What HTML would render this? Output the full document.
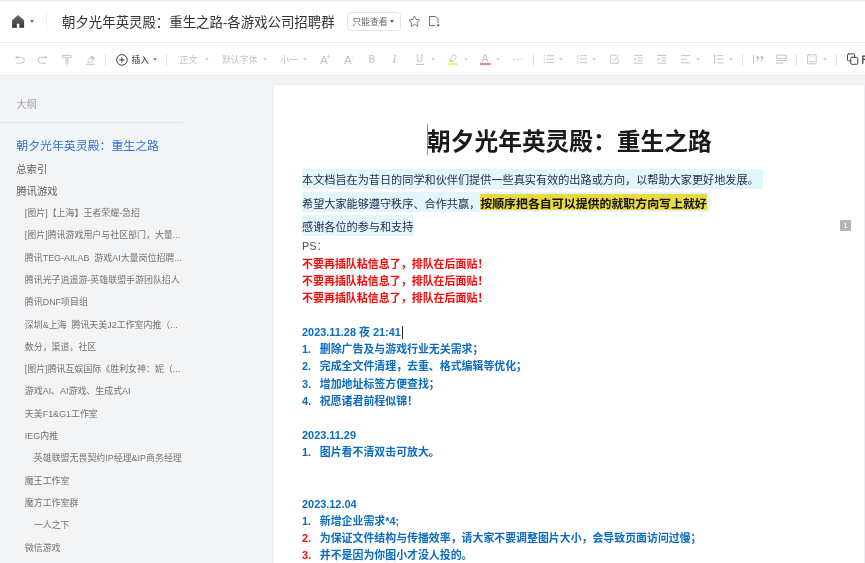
<!DOCTYPE html>
<html lang="zh-CN">
<head>
<meta charset="utf-8">
<title>朝夕光年英灵殿：重生之路-各游戏公司招聘群</title>
<style>
*{margin:0;padding:0;box-sizing:border-box}
html,body{width:865px;height:563px;overflow:hidden;background:#f3f4f6}
body{position:relative;font-family:"Liberation Sans","Noto Sans CJK SC",sans-serif;color:#333;-webkit-font-smoothing:antialiased}
#root{position:absolute;left:0;top:0;width:900px;height:600px;will-change:transform;filter:blur(0.4px)}
.abs{position:absolute;white-space:nowrap}
#header{position:absolute;left:0;top:0;width:900px;height:43px;background:#fff;border-bottom:1px solid #ececee}
#topline{position:absolute;left:0;top:0;width:900px;height:2px;background:linear-gradient(#e6e6e6,#fff)}
#toolbar{position:absolute;left:0;top:43px;width:900px;height:33px;background:#fff;border-bottom:1px solid #e7e8ea}
.t{position:absolute;white-space:nowrap;line-height:1}
.sep{position:absolute;width:1px;background:#e3e4e6}
.caret{position:absolute;width:0;height:0;border-left:2.4px solid transparent;border-right:2.4px solid transparent;border-top:3px solid #d4d6d9}
svg{position:absolute;overflow:visible}
/* sidebar */
.o{position:absolute;white-space:nowrap;line-height:14px;height:14px;color:#737373;font-size:8.95px}
.o1{font-size:10.3px;color:#626262;left:16.3px}
.o2{left:24.8px}
.o3{left:33.8px}
/* page */
#page{position:absolute;left:274px;top:84.5px;width:590px;height:520px;background:#fff;box-shadow:0 0 4px rgba(0,0,0,.07)}
.p{position:absolute;white-space:nowrap;left:302px;line-height:17px;height:17px}
.n{font-size:11.15px;color:#1f2747}
.hl{background:#e1f7fc;display:inline-block;height:20.3px;line-height:23.4px;vertical-align:top}
.l1 .hl{line-height:22.2px}.l2 .hl{line-height:25.4px}.l3 .hl{line-height:25.6px}
.b{font-weight:bold}
.red{color:#f80a0a;font-weight:bold;font-size:10.97px}
.blue{color:#0b6cc0;font-weight:bold;font-size:10.92px}
.num{display:inline-block;width:17.8px}
</style>
</head>
<body>
<div id="root">
<div id="header"></div>
<div id="topline"></div>
<div id="toolbar"></div>

<!-- header content -->
<svg style="left:11.8px;top:15px" width="12.2" height="12.8" viewBox="0 0 12.2 12.8"><defs><linearGradient id="hg" x1="0" y1="0" x2="0" y2="1"><stop offset="0" stop-color="#666"/><stop offset="0.7" stop-color="#4a4a4a"/><stop offset="1" stop-color="#2c2c2c"/></linearGradient></defs><path d="M6.1 0 L12.1 5.2 V12.8 H7.4 V8.8 H4.9 V12.8 H0.1 V5.2 Z" fill="url(#hg)"/></svg>
<div class="caret" style="left:30.1px;top:20.1px;border-top-color:#6a6a6a;border-left-width:2.5px;border-right-width:2.5px;border-top-width:3.2px"></div>
<div class="sep" style="left:45.5px;top:12.6px;height:17.4px;background:#f1f1f2"></div>
<div class="t" style="left:62px;top:14.6px;font-size:13.42px;line-height:15px;color:#333;letter-spacing:0">朝夕光年英灵殿：重生之路-各游戏公司招聘群</div>
<div class="abs" style="left:346.8px;top:12.1px;width:54.2px;height:18.7px;border:1px solid #e3e4e6;border-radius:3.5px"></div>
<div class="t" style="left:352.2px;top:18px;font-size:8.9px;color:#666">只能查看</div>
<div class="caret" style="left:390.2px;top:20.4px;border-top-color:#5c5c5c;border-left-width:2.2px;border-right-width:2.2px;border-top-width:3px"></div>
<svg style="left:407.8px;top:14.8px" width="12.8" height="12.2" viewBox="0 0 24 23"><path d="M12 1.8 L15.1 8.3 L22.2 9.2 L17 14.1 L18.3 21.2 L12 17.7 L5.7 21.2 L7 14.1 L1.8 9.2 L8.9 8.3 Z" fill="none" stroke="#606164" stroke-width="1.5" stroke-linejoin="round"/></svg>
<svg style="left:429.2px;top:15.8px" width="11.4" height="11.2" viewBox="0 0 11.4 11.2"><path d="M0.5 0.5 H6.6 L9 2.9 V7 M6.3 9.6 H0.5 V0.5" fill="none" stroke="#66676a" stroke-width="0.95"/><path d="M7.6 8.6 H11 L9.3 10.9 Z" fill="#55565a"/></svg>

<!-- toolbar content -->
<svg id="tb" style="left:0;top:43px" width="865" height="33" viewBox="0 43 865 33" fill="none" stroke="#c3c5c9" stroke-width="1" stroke-linecap="round" stroke-linejoin="round">
 <!-- undo -->
 <path d="M17.8 57.3 H21.3 A2.9 2.9 0 0 1 21.3 63.2 H16.4"/><path d="M17.9 55.2 L15 57.3 L17.9 59.3 Z" fill="#c3c5c9" stroke="none"/>
 <!-- redo -->
 <path d="M44.7 57.3 H41.2 A2.9 2.9 0 0 0 41.2 63.2 H46.1"/><path d="M44.6 55.2 L47.5 57.3 L44.6 59.3 Z" fill="#c3c5c9" stroke="none"/>
 <!-- format painter -->
 <path d="M63 55.3 H71 V57.8 H63 Z M67 57.8 V60 M66.2 60 H67.8 V64 H66.2 Z"/>
 <!-- eraser -->
 <path d="M86.6 64.3 H94.6 M88 60.4 L91.6 56 L94.3 58.2 L90.8 62.6 H89.2 Z"/><path d="M90 57.8 L92.8 60.2 L94.3 58.2 L91.6 56 Z" fill="#c3c5c9" stroke="none"/>
</svg>
<div class="sep" style="left:105px;top:53.5px;height:12px"></div>
<svg style="left:116.4px;top:53.7px" width="11.8" height="11.8" viewBox="0 0 11.8 11.8"><circle cx="5.9" cy="5.9" r="5.3" fill="none" stroke="#3a3b3e" stroke-width="1"/><path d="M5.9 3.2 V8.6 M3.2 5.9 H8.6" stroke="#3a3b3e" stroke-width="1" fill="none"/></svg>
<div class="t" style="left:131.4px;top:55.8px;font-size:8.75px;color:#333">插入</div>
<div class="caret" style="left:153.0px;top:58.3px;border-top-color:#8a8c90"></div>
<div class="sep" style="left:166px;top:53.5px;height:12px"></div>
<div class="t" style="left:179.6px;top:55.8px;font-size:8.8px;color:#c0c2c6">正文</div>
<div class="caret" style="left:205.1px;top:58.3px"></div>
<div class="t" style="left:222px;top:55.8px;font-size:8.9px;color:#c0c2c6">默认字体</div>
<div class="caret" style="left:263.4px;top:58.3px"></div>
<div class="t" style="left:280.3px;top:55.8px;font-size:8.85px;color:#c0c2c6">小一</div>
<div class="caret" style="left:302.8px;top:58.3px"></div>
<div class="t" style="left:320px;top:54.3px;font-size:11.6px;color:#c0c2c6">A<span style="font-size:6.5px;position:relative;top:-5px;left:-1px">+</span></div>
<div class="t" style="left:344px;top:54.3px;font-size:11.6px;color:#c0c2c6">A<span style="font-size:6.5px;position:relative;top:-5.4px;left:-0.6px">-</span></div>
<div class="t" style="left:368.6px;top:54.6px;font-size:10.4px;color:#c0c2c6">B</div>
<div class="t" style="left:392.6px;top:54.2px;font-size:11.6px;color:#c0c2c6;font-style:italic;font-family:'Liberation Serif',serif">I</div>
<div class="t" style="left:416px;top:54.2px;font-size:10px;color:#c0c2c6">U</div>
<div class="abs" style="left:415.6px;top:63.9px;width:8.2px;height:1px;background:#c3c5c9"></div>
<div class="caret" style="left:430.8px;top:58.3px"></div>

<svg style="left:0;top:43px" width="865" height="33" viewBox="0 43 865 33" fill="none" stroke="#c3c5c9" stroke-width="1" stroke-linecap="round" stroke-linejoin="round">
 <!-- highlighter -->
 <path d="M450.4 58.6 L453.6 54.6 L456.6 56.9 L453.4 60.9 L450.6 60.9 Z M449.6 61.2 H452"/>
 <rect x="447.2" y="62.8" width="10.8" height="2.4" fill="#f6f07a" stroke="none"/>
 <!-- font color -->
 <rect x="480" y="62.8" width="10.8" height="2.4" fill="#f28a8a" stroke="none"/>
 <!-- more -->
 <circle cx="514.4" cy="59.2" r="0.75" fill="#c3c5c9" stroke="none"/><circle cx="518" cy="59.2" r="0.75" fill="#c3c5c9" stroke="none"/><circle cx="521.6" cy="59.2" r="0.75" fill="#c3c5c9" stroke="none"/>
 <!-- bullet list -->
 <path d="M547 55.7 H553.8 M547 59.1 H553.8 M547 62.5 H553.8"/><path d="M544.2 55.7 h0.4 M544.2 59.1 h0.4 M544.2 62.5 h0.4" stroke-width="1.3"/>
 <!-- numbered list -->
 <path d="M580.6 55.7 H586.6 M580.6 59.1 H586.6 M580.6 62.5 H586.6"/><path d="M578 54.8 V56.4 M578 58.2 V59.8 M578 61.6 V63.4" stroke-width="0.9"/>
 <!-- checkbox -->
 <path d="M618.2 58.6 V63.2 H610.4 V55.2 H616.4"/><path d="M612.4 58.6 L614.2 60.6 L618.4 55.6"/>
 <!-- outdent -->
 <path d="M634 55.4 H642.4 M638 58 H642.4 M638 60.6 H642.4 M634 63.2 H642.4"/><path d="M636.2 57.6 L633.8 59.3 L636.2 61 Z" fill="#c3c5c9" stroke="none"/>
 <!-- indent -->
 <path d="M657.6 55.4 H666 M661.6 58 H666 M661.6 60.6 H666 M657.6 63.2 H666"/><path d="M657.6 57.6 L660 59.3 L657.6 61 Z" fill="#c3c5c9" stroke="none"/>
 <!-- align -->
 <path d="M681.4 55.6 H689.8 M681.4 59.2 H686.6 M681.4 62.8 H689.8"/>
 <!-- line spacing -->
 <path d="M717.4 55.6 H723 M717.4 59.2 H723 M717.4 62.8 H723 M714.6 55 V63.4"/><path d="M713.4 56.4 L714.6 54.8 L715.8 56.4 Z M713.4 62 L714.6 63.6 L715.8 62 Z" fill="#c3c5c9" stroke="none"/>
 <!-- quote -->
 <path d="M753.6 55.2 V63.6"/>
 <!-- divider icon -->
 <rect x="776.6" y="55.2" width="9.8" height="3.2" rx="0.3"/><path d="M776.4 60.4 H786.6 M776.4 63.2 H783"/>
 <!-- image -->
 <rect x="807.6" y="54.8" width="8.6" height="9" rx="0.8"/><path d="M809.4 61.8 H814.4" stroke-width="1"/><path d="M809.4 56.9 H814.4" stroke-width="0.6" stroke="#dcdde0"/>
 <!-- copy -->
 <rect x="847.5" y="53.9" width="7" height="7" rx="1" stroke="#454649" fill="#fff"/><rect x="850.8" y="57.3" width="7" height="7" rx="1" stroke="#454649" fill="#fff"/>
 <path d="M862.8 56 V63.6 M862.8 56.2 H866 M862.8 59.4 H866" stroke="#3a3b3e" stroke-width="1.2"/>
</svg>
<div class="t" style="left:481.6px;top:53.4px;font-size:10.6px;color:#c0c2c6">A</div>
<svg style="left:755.6px;top:56.2px" width="7.6" height="5.8" viewBox="0 0 7.6 5.8"><path d="M3.2 1.6 C3.2 3.7 2.3 5.1 0.8 5.7 L0.4 5.1 C1.4 4.5 1.8 3.7 1.8 3 A1.45 1.45 0 1 1 3.2 1.6 Z M7.4 1.6 C7.4 3.7 6.5 5.1 5 5.7 L4.6 5.1 C5.6 4.5 6 3.7 6 3 A1.45 1.45 0 1 1 7.4 1.6 Z" fill="#c0c2c6"/></svg>
<div class="caret" style="left:463.6px;top:58.3px"></div>
<div class="caret" style="left:496.3px;top:58.3px"></div>
<div class="sep" style="left:533px;top:53.5px;height:12px"></div>
<div class="caret" style="left:559.4px;top:58.3px"></div>
<div class="caret" style="left:592.2px;top:58.3px"></div>
<div class="caret" style="left:696.0px;top:58.3px"></div>
<div class="caret" style="left:729.1px;top:58.3px"></div>
<div class="sep" style="left:742px;top:53.5px;height:12px"></div>
<div class="sep" style="left:796.4px;top:53.5px;height:12px"></div>
<div class="caret" style="left:822.6px;top:58.3px"></div>
<div class="sep" style="left:836px;top:53.5px;height:12px"></div>

<!-- sidebar -->
<div class="t" style="left:16.3px;top:99.9px;font-size:10.3px;color:#a3a5a8">大纲</div>
<div class="abs" style="left:0;top:121.6px;width:182px;height:1px;background:#e2e3e6"></div>
<div class="o o1" style="top:138.5px;font-size:11.9px;color:#2d71da">朝夕光年英灵殿：重生之路</div>
<div class="o o1" style="top:163px">总索引</div>
<div class="o o1" style="top:185px">腾讯游戏</div>
<div class="o o2" style="top:206px">[图片]【上海】王者荣耀-急招</div>
<div class="o o2" style="top:228px">[图片]腾讯游戏用户与社区部门，大量...</div>
<div class="o o2" style="top:251px">腾讯TEG-AILAB&nbsp; 游戏AI大量岗位招聘...</div>
<div class="o o2" style="top:273px">腾讯光子逍遥游-英雄联盟手游团队招人</div>
<div class="o o2" style="top:295px">腾讯DNF项目组</div>
<div class="o o2" style="top:318px">深圳&amp;上海&nbsp; 腾讯天美J2工作室内推（...</div>
<div class="o o2" style="top:340px">数分，渠道，社区</div>
<div class="o o2" style="top:362px">[图片]腾讯互娱国际《胜利女神：妮（...</div>
<div class="o o2" style="top:384px">游戏AI、AI游戏、生成式AI</div>
<div class="o o2" style="top:407px">天美F1&amp;G1工作室</div>
<div class="o o2" style="top:429px">IEG内推</div>
<div class="o o3" style="top:451px">英雄联盟无畏契约IP经理&amp;IP商务经理</div>
<div class="o o2" style="top:474px">魔王工作室</div>
<div class="o o2" style="top:496px">魔方工作室群</div>
<div class="o o3" style="top:518px">一人之下</div>
<div class="o o2" style="top:541px">微信游戏</div>

<!-- page -->
<div id="page"></div>
<div class="abs" style="left:426.6px;top:124px;width:1.4px;height:30.6px;background:#f4773a"></div>
<div class="t b" style="left:427px;top:128px;font-size:23.73px;line-height:28px;color:#1a1a1a">朝夕光年英灵殿：重生之路</div>

<div class="p n l1" style="top:168.7px;height:20.3px"><span class="hl">本文档旨在为昔日的同学和伙伴们提供一些真实有效的出路或方向，以帮助大家更好地发展。<span style="display:inline-block;width:4px"></span></span></div>
<div class="p n l2" style="top:192px;height:20.3px"><span class="hl">希望大家能够遵守秩序、合作共赢，</span><span class="hl b" style="background:linear-gradient(#e1f7fc 0,#e1f7fc 2.1px,#ecd93e 2.1px,#ecd93e 17.8px,#e1f7fc 17.8px);color:#111;font-size:11.93px">按顺序把各自可以提供的就职方向写上就好</span><span class="hl" style="width:3.5px"></span></div>
<div class="p n l3" style="top:215.3px;height:20.3px"><span class="hl">感谢各位的参与和支持</span></div>
<div class="p" style="top:238px;font-size:10.9px;color:#4e4e4e">PS：</div>
<div class="p red" style="top:256px">不要再插队粘信息了，排队在后面贴！</div>
<div class="p red" style="top:273px">不要再插队粘信息了，排队在后面贴！</div>
<div class="p red" style="top:290px">不要再插队粘信息了，排队在后面贴！</div>

<div class="p blue" style="top:324px">2023.11.28 夜 21:41</div>
<div class="abs" style="left:401.6px;top:325.8px;width:1px;height:13px;background:#222"></div>
<div class="p blue" style="top:341px"><span class="num">1.</span>删除广告及与游戏行业无关需求；</div>
<div class="p blue" style="top:358px"><span class="num">2.</span>完成全文件清理，去重、格式编辑等优化；</div>
<div class="p blue" style="top:376px"><span class="num">3.</span>增加地址标签方便查找；</div>
<div class="p blue" style="top:393px"><span class="num">4.</span>祝愿诸君前程似锦！</div>

<div class="p blue" style="top:427px">2023.11.29</div>
<div class="p blue" style="top:444px"><span class="num">1.</span>图片看不清双击可放大。</div>

<div class="p blue" style="top:496px">2023.12.04</div>
<div class="p blue" style="top:513px"><span class="num">1.</span>新增企业需求*4;</div>
<div class="p blue" style="top:530px"><span class="num" style="color:#f80a0a">2.</span>为保证文件结构与传播效率，请大家不要调整图片大小，会导致页面访问过慢；</div>
<div class="p blue" style="top:547px"><span class="num" style="color:#f80a0a">3.</span>并不是因为你图小才没人投的。</div>

<!-- comment badge -->
<div class="abs" style="left:840px;top:220.4px;width:11px;height:10.4px;background:#b5b5b5"></div>
<div class="t" style="left:843.3px;top:222px;font-size:8px;color:#fff;font-family:'Liberation Sans',sans-serif">1</div>
</div>
</body>
</html>
